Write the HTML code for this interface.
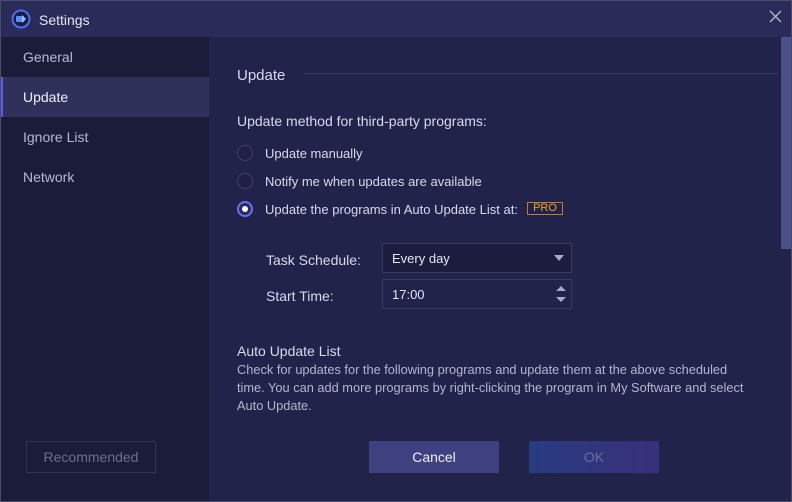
<!DOCTYPE html>
<html><head><style>
*{margin:0;padding:0;box-sizing:border-box}
body{width:792px;height:502px;overflow:hidden;background:#22234a;font-family:"Liberation Sans","DejaVu Sans",sans-serif;color:#d8d9ee;position:relative}
.abs{position:absolute}
#frame{position:absolute;left:0;top:0;width:792px;height:502px;border:1px solid #4a4b66;pointer-events:none}
#title{left:0;top:0;width:792px;height:37px;background:#2a2b58}
#side{left:0;top:37px;width:209px;height:465px;background:#1b1c3a}
.nav{position:absolute;left:0;width:209px;height:40px;line-height:40px;padding-left:23px;font-size:14px;color:#b8b9d4}
.t{font-size:13px;color:#d8d9ee;white-space:nowrap}
.radio{position:absolute;width:16px;height:16px;border-radius:50%;border:1px solid #3f4068;background:#1f2044}
.box{position:absolute;background:#1c1d3e;border:1px solid #3a3b5e;font-size:13px;color:#e4e5f2;padding-left:9px}
</style></head><body>
<div id="title" class="abs">
<svg class="abs" style="left:11px;top:9px" width="20" height="20" viewBox="0 0 20 20"><circle cx="10" cy="10" r="8.5" fill="#1c1d40" stroke="#4a72f0" stroke-width="2"/><rect x="5" y="7" width="8" height="6" rx="1" fill="#5a8cff"/><path d="M11 6l4 4-4 4z" fill="#9fc0ff"/></svg>
<div class="abs" style="left:39px;top:12px;font-size:14px;color:#e4e5f2">Settings</div>
<svg class="abs" style="left:769px;top:10px" width="13" height="13" viewBox="0 0 13 13"><path d="M1 1L12 12M12 1L1 12" stroke="#b8b9d0" stroke-width="1.3"/></svg>
</div>
<div id="side" class="abs">
<div class="nav" style="top:0">General</div>
<div class="nav" style="top:40px;background:#30315a;color:#eef;border-left:3px solid #5660e0;padding-left:20px">Update</div>
<div class="nav" style="top:80px">Ignore List</div>
<div class="nav" style="top:120px">Network</div>
<div class="abs" style="left:26px;top:404px;width:130px;height:32px;border:1px solid #33345a;color:#6d6e92;font-size:14px;text-align:center;line-height:30px">Recommended</div>
</div>
<div class="abs" style="left:781px;top:37px;width:10px;height:212px;background:#4a5188"></div>
<div class="abs t" style="left:237px;top:67px;font-size:15px">Update</div>
<div class="abs" style="left:304px;top:73px;width:473px;height:1px;background:#3c3d64"></div>
<div class="abs t" style="left:237px;top:113px;font-size:14px">Update method for third-party programs:</div>
<div class="radio" style="left:237px;top:145px"></div><div class="abs t" style="left:265px;top:146px">Update manually</div>
<div class="radio" style="left:237px;top:173px"></div><div class="abs t" style="left:265px;top:174px">Notify me when updates are available</div>
<div class="radio" style="left:237px;top:201px;border:2px solid #6a6ef0;background:#2a2b58"><div style="position:absolute;left:3px;top:3px;width:6px;height:6px;border-radius:50%;background:#fff"></div></div>
<div class="abs t" style="left:265px;top:202px">Update the programs in Auto Update List at:</div>
<div class="abs" style="left:527px;top:202px;width:36px;height:13px;border:1px solid #c47a28;color:#f0a030;font-size:11px;line-height:11px;text-align:center">PRO</div>
<div class="abs t" style="left:266px;top:252px;font-size:14px">Task Schedule:</div>
<div class="box" style="left:382px;top:243px;width:190px;height:30px;line-height:29px">Every day</div>
<svg class="abs" style="left:554px;top:255px" width="10" height="6"><path d="M0 0h10L5 6z" fill="#a8a9c4"/></svg>
<div class="abs t" style="left:266px;top:288px;font-size:14px">Start Time:</div>
<div class="box" style="left:382px;top:279px;width:190px;height:30px;line-height:29px;background:#22234a">17:00</div>
<svg class="abs" style="left:556px;top:285px" width="10" height="18"><path d="M0 6L5 1L10 6z M0 12L5 17L10 12z" fill="#a8a9c4"/></svg>
<div class="abs t" style="left:237px;top:343px;font-size:14px">Auto Update List</div>
<div class="abs" style="left:237px;top:361px;width:516px;font-size:12.8px;line-height:18px;color:#b4b5d0">Check for updates for the following programs and update them at the above scheduled time. You can add more programs by right-clicking the program in My Software and select Auto Update.</div>
<div class="abs" style="left:369px;top:441px;width:130px;height:32px;background:#3e4080;color:#f0f0fa;font-size:14px;text-align:center;line-height:32px">Cancel</div>
<div class="abs" style="left:529px;top:441px;width:130px;height:32px;background:linear-gradient(90deg,#283c80,#38307a);color:#6c6e9a;font-size:14px;text-align:center;line-height:32px">OK</div>
<div id="frame"></div>
</body></html>
